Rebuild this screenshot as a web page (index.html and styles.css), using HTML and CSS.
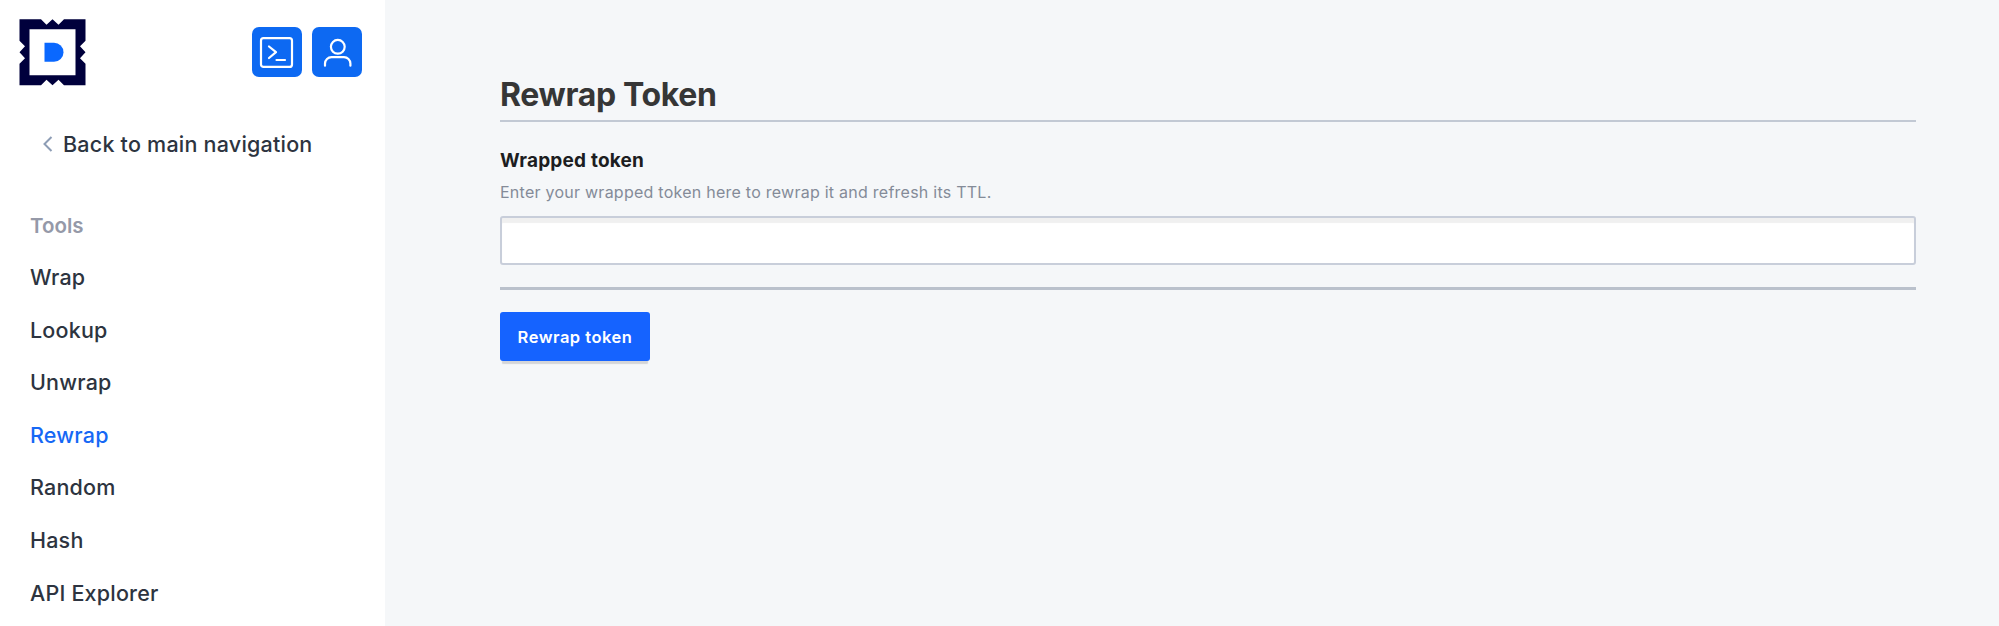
FILE: index.html
```html
<!DOCTYPE html>
<html lang="en">
<head>
<meta charset="utf-8">
<title>Rewrap Token</title>
<link rel="stylesheet" href="styles.css">
</head>
<body>
<div class="app">
  <aside class="sidebar">
    <header class="sidebar-header">
      <svg class="logo" viewBox="-0.500 -0.300 67 67" width="67" height="67">
        <path fill="#00003c" fill-rule="evenodd" d="M0 0H21.500L27 5.500L33 0L39 5.500L44.500 0H66V21.500L60.500 27L66 33L60.500 39L66 44.500V66H44.500L39 60.500L33 66L27 60.500L21.500 66H0V44.500L5.500 39L0 33L5.500 27L0 21.500ZM10 10V56H56V10Z"/>
        <path fill="#0a68ff" d="M25 23.500H34.500A9.500 9.500 0 0 1 34.500 42.500H25Z"/>
      </svg>
      <div class="actions">
        <button class="icon-button" aria-label="Console">
          <svg viewBox="0 0 50 50" width="50" height="50" fill="none" stroke="#fff" stroke-width="2.200" stroke-linecap="round" stroke-linejoin="round"><rect x="9" y="11.200" width="31" height="28.700" rx="2.500"/><path d="M17 19.500L24 25.200L17 31M24.500 33H33"/></svg>
        </button>
        <button class="icon-button" aria-label="User">
          <svg viewBox="0 0 50 50" width="50" height="50" fill="none" stroke="#fff" stroke-width="2.200" stroke-linecap="round"><circle cx="25.800" cy="19.800" r="6.900"/><path d="M13 38.700V36.500A6.500 6.500 0 0 1 19.500 30.200H32A6.500 6.500 0 0 1 38.400 36.500V38.700"/></svg>
        </button>
      </div>
    </header>
    <a class="back"><svg viewBox="0 0 10 16" width="10" height="16" fill="none" stroke="#8d9db5" stroke-width="2"><path d="M8.500 1L1.500 8L8.500 15"/></svg><span>Back to main navigation</span></a>
    <nav class="nav">
      <h2 class="nav-title">Tools</h2>
      <a class="nav-item">Wrap</a>
      <a class="nav-item">Lookup</a>
      <a class="nav-item">Unwrap</a>
      <a class="nav-item active">Rewrap</a>
      <a class="nav-item">Random</a>
      <a class="nav-item">Hash</a>
      <a class="nav-item">API Explorer</a>
    </nav>
  </aside>
  <main class="main">
    <h1 class="title">Rewrap Token</h1>
    <form class="form">
      <label class="label" for="token">Wrapped token</label>
      <p class="help">Enter your wrapped token here to rewrap it and refresh its TTL.</p>
      <input class="input" id="token" type="text">
      <hr class="divider">
      <button class="submit" type="button">Rewrap token</button>
    </form>
  </main>
</div>
</body>
</html>
```

FILE: styles.css
```css
* { box-sizing: border-box; }
body { margin: 0; font-family: Inter, "Liberation Sans", sans-serif; background: #f5f7f9; color: #2d3440; }
.app { display: flex; height: 626px; overflow: hidden; }
.sidebar { width: 385px; flex: none; background: #fff; }
.sidebar-header { display: flex; justify-content: space-between; align-items: flex-start; padding: 19px 23px 0 19px; height: 119px; }
.logo { display: block; }
.actions { display: flex; gap: 10px; padding-top: 8px; }
.icon-button { width: 50px; height: 50px; padding: 0; border: 0; border-radius: 7px; background: #0d69f2; }
.icon-button svg { display: block; }
.back { display: flex; align-items: center; gap: 10px; height: 50px; padding-left: 43px; font-size: 21.500px; font-weight: 500; letter-spacing: 0.220px; }
.nav { padding: 31px 30px 0; }
.nav-title { margin: 0; height: 51px; line-height: 52.600px; font-size: 20.500px; font-weight: 600; color: #9599a8; }
.nav-item { display: block; height: 52.600px; line-height: 52.600px; font-size: 21.500px; font-weight: 500; letter-spacing: 0.200px; }
.active { color: #1668f5; }
.main { flex: 1; padding: 68px 83px 0 115px; }
.title { margin: 0; height: 54px; line-height: 54px; border-bottom: 2px solid #c2c9d4; font-size: 32px; font-weight: 700; letter-spacing: -0.350px; color: #363636; }
.form { display: flex; flex-direction: column; align-items: flex-start; padding-top: 24px; }
.label { height: 30px; line-height: 30px; font-size: 19px; font-weight: 700; letter-spacing: 0.200px; color: #1c1d21; }
.help { margin: 3px 0 0; height: 27px; line-height: 26px; font-size: 16px; letter-spacing: 0.250px; color: #848b98; }
.input { width: 100%; height: 49px; margin: 10px 0 0; border: 2px solid #c8ceda; border-radius: 3px; background: #fff; box-shadow: inset 0 5px 1px #f0f0f0; }
.divider { width: 100%; height: 3px; margin: 22px 0 0; border: 0; background: #bac1cc; }
.submit { width: 150px; height: 49px; margin-top: 22px; padding: 0; border: 0; border-radius: 3px; background: #1563ff; color: #fff; font: 600 16.500px Inter, sans-serif; letter-spacing: 0.500px; box-shadow: 0 5px 1px -2px #d4d5d8; }
```
